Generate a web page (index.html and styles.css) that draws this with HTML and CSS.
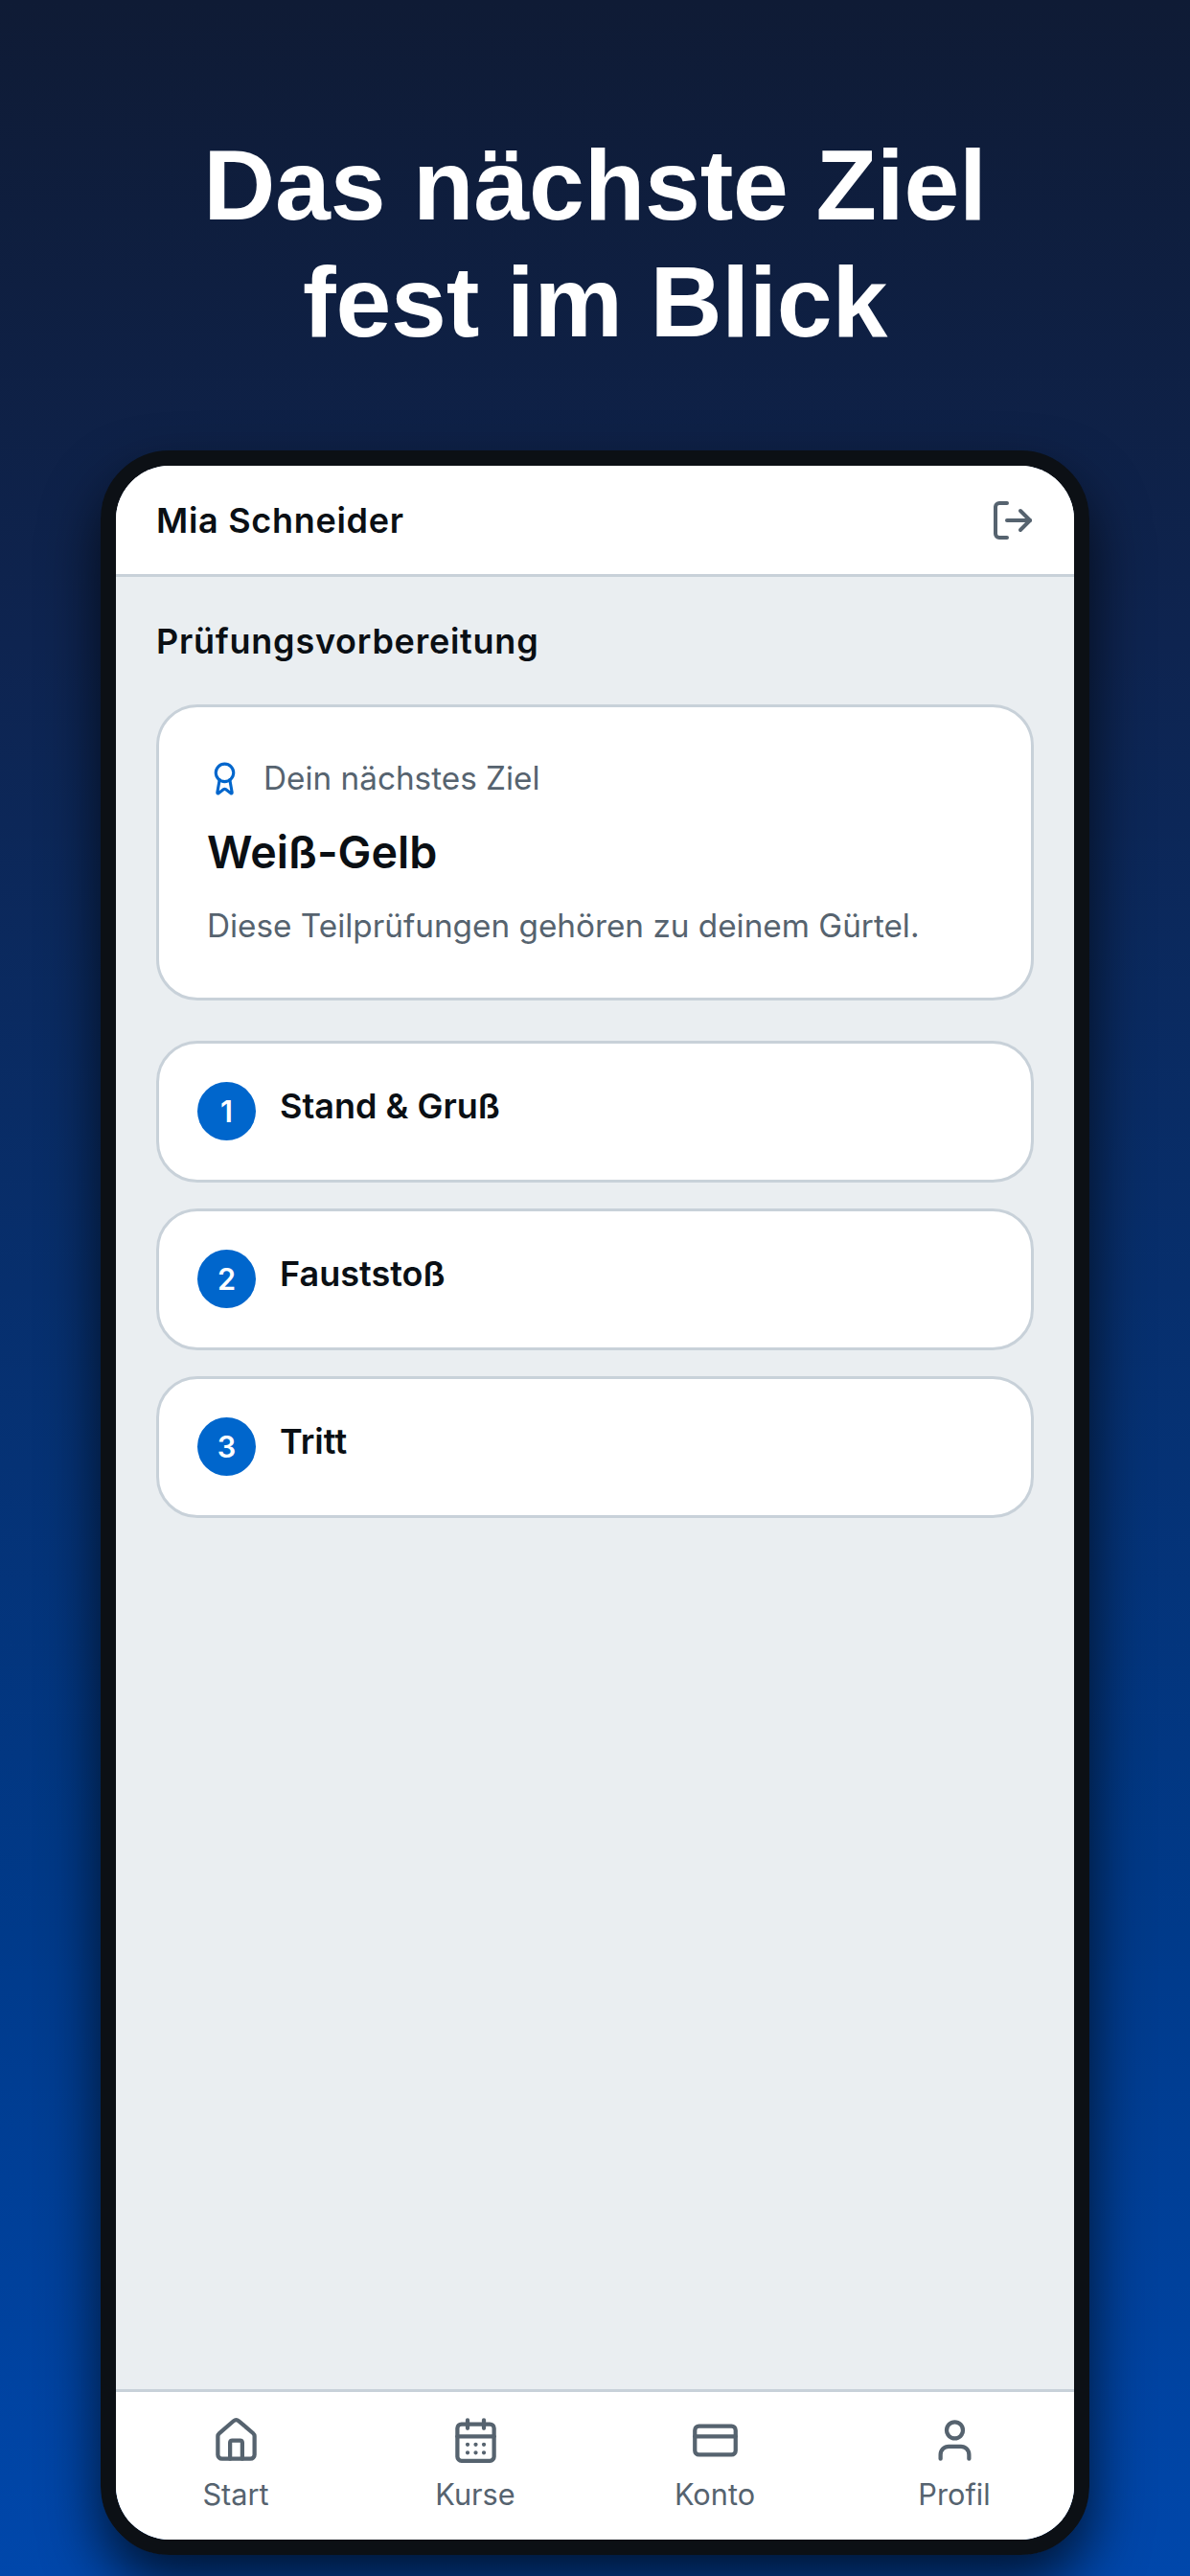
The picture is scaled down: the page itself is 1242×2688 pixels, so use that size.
FILE: index.html
```html
<!DOCTYPE html>
<html lang="de">
<head>
  <meta charset="utf-8">
  <title>Das nächste Ziel fest im Blick</title>
  <link rel="stylesheet" href="styles.css">
</head>
<body>
  <h1 class="headline">Das nächste Ziel<br>fest im Blick</h1>

  <div class="phone">
    <div class="screen">
      <header class="topbar">
        <span class="user-name">Mia Schneider</span>
        <svg class="icon logout-icon" viewBox="0 0 24 24">
          <path d="M9 21H5a2 2 0 0 1-2-2V5a2 2 0 0 1 2-2h4"/>
          <path d="M16 17l5-5-5-5"/>
          <path d="M21 12H9"/>
        </svg>
      </header>

      <main class="content">
        <h2 class="section-title">Prüfungsvorbereitung</h2>

        <section class="card goal-card">
          <div class="goal-label">
            <svg class="icon award-icon" viewBox="0 0 24 24">
              <circle cx="12" cy="8" r="6"/>
              <path d="M15.477 12.89l1.515 8.526a.5.5 0 0 1-.81.47l-3.58-2.687a1 1 0 0 0-1.197 0l-3.586 2.686a.5.5 0 0 1-.81-.469l1.514-8.526"/>
            </svg>
            <span>Dein nächstes Ziel</span>
          </div>
          <div class="goal-name">Weiß-Gelb</div>
          <p class="goal-text">Diese Teilprüfungen gehören zu deinem Gürtel.</p>
        </section>

        <div class="step-list">
          <div class="card step"><span class="step-num">1</span><span class="step-name">Stand &amp; Gruß</span></div>
          <div class="card step"><span class="step-num">2</span><span class="step-name">Fauststoß</span></div>
          <div class="card step"><span class="step-num">3</span><span class="step-name">Tritt</span></div>
        </div>
      </main>

      <nav class="tabbar">
        <div class="tab">
          <svg class="icon" viewBox="0 0 24 24">
            <path d="M15 21v-8a1 1 0 0 0-1-1h-4a1 1 0 0 0-1 1v8"/>
            <path d="M3 10a2 2 0 0 1 .709-1.528l7-5.999a2 2 0 0 1 2.582 0l7 5.999A2 2 0 0 1 21 10v9a2 2 0 0 1-2 2H5a2 2 0 0 1-2-2z"/>
          </svg>
          <span>Start</span>
        </div>
        <div class="tab">
          <svg class="icon" viewBox="0 0 24 24">
            <path d="M8 2v4M16 2v4"/>
            <rect x="3" y="4" width="18" height="18" rx="2"/>
            <path d="M3 10h18"/>
            <path d="M8 14h.01M12 14h.01M16 14h.01M8 18h.01M12 18h.01M16 18h.01"/>
          </svg>
          <span>Kurse</span>
        </div>
        <div class="tab">
          <svg class="icon" viewBox="0 0 24 24">
            <rect x="2" y="5" width="20" height="14" rx="2"/>
            <path d="M2 10h20"/>
          </svg>
          <span>Konto</span>
        </div>
        <div class="tab">
          <svg class="icon" viewBox="0 0 24 24">
            <circle cx="12" cy="7" r="4"/>
            <path d="M19 21v-2a4 4 0 0 0-4-4H9a4 4 0 0 0-4 4v2"/>
          </svg>
          <span>Profil</span>
        </div>
      </nav>
    </div>
  </div>
</body>
</html>
```

FILE: styles.css
```css
html, body {
  height: 100%;
}

body {
  margin: 0;
  height: 2688px;
  overflow: hidden;
  background: linear-gradient(180deg, #0f1b35 0%, #0e2450 25%, #003a8a 75%, #0047ab 100%);
  font-family: Inter, "Liberation Sans", sans-serif;
  display: flex;
  flex-direction: column;
  align-items: center;
}

.headline {
  margin: 132px 0 0;
  font-family: "Liberation Sans", Arial, sans-serif;
  font-size: 104px;
  font-weight: 700;
  line-height: 122px;
  letter-spacing: -0.2px;
  text-align: center;
  color: #ffffff;
}

.phone {
  margin-top: 94px;
  width: 1000px;
  height: 2164px;
  border: 16px solid #0c1015;
  border-radius: 72px;
  box-shadow: 0 30px 60px rgba(0, 0, 0, 0.7);
  flex-shrink: 0;
}

.screen {
  height: 100%;
  border-radius: 56px;
  overflow: hidden;
  background-color: #eaeef1;
  display: flex;
  flex-direction: column;
}

.icon {
  width: 51px;
  height: 51px;
  fill: none;
  stroke: #56636f;
  stroke-width: 2;
  stroke-linecap: round;
  stroke-linejoin: round;
}

.topbar {
  height: 113px;
  padding: 0 40px 0 42px;
  background-color: #ffffff;
  border-bottom: 3px solid #c8d1d9;
  display: flex;
  justify-content: space-between;
  align-items: center;
  flex-shrink: 0;
}

.logout-icon {
  width: 48px;
  height: 48px;
}

.user-name {
  font-size: 36px;
  font-weight: 600;
  letter-spacing: 0.7px;
  color: #0a0f14;
}

.content {
  flex: 1;
  padding: 42px 42px 0;
}

.section-title {
  margin: 0 0 41px;
  font-size: 36px;
  font-weight: 600;
  line-height: 50px;
  letter-spacing: 0.75px;
  color: #0a0f14;
}

.card {
  background-color: #ffffff;
  border: 3px solid #c8d1d9;
  border-radius: 43px;
}

.goal-card {
  height: 309px;
  box-sizing: border-box;
  padding: 50px 50px 0;
}

.goal-label {
  display: flex;
  align-items: center;
  gap: 22px;
  font-size: 33.3px;
  line-height: 48px;
  color: #56636f;
}

.award-icon {
  width: 37px;
  height: 37px;
  stroke: #0066cc;
}

.goal-name {
  margin-top: 23px;
  font-size: 46.6px;
  font-weight: 600;
  line-height: 60px;
  color: #0a0f14;
}

.goal-text {
  margin: 23px 0 0;
  font-size: 33.3px;
  line-height: 48px;
  color: #56636f;
}

.step-list {
  margin-top: 42px;
  display: flex;
  flex-direction: column;
  gap: 27px;
}

.step {
  height: 148px;
  box-sizing: border-box;
  padding: 40px 40px 0;
  display: flex;
  align-items: flex-start;
  gap: 25px;
}

.step-num {
  width: 61px;
  height: 61px;
  border-radius: 50%;
  background-color: #0066cc;
  color: #ffffff;
  font-size: 30.7px;
  font-weight: 600;
  display: flex;
  align-items: center;
  justify-content: center;
}

.step-name {
  font-size: 36px;
  font-weight: 600;
  line-height: 50px;
  color: #0a0f14;
}

.tabbar {
  height: 157px;
  box-sizing: border-box;
  background-color: #ffffff;
  border-top: 3px solid #c8d1d9;
  display: grid;
  grid-template-columns: repeat(4, 1fr);
  flex-shrink: 0;
}

.tab {
  padding-top: 25px;
  display: flex;
  flex-direction: column;
  align-items: center;
  gap: 11px;
  font-size: 30.7px;
  line-height: 40px;
  color: #56636f;
}
```
